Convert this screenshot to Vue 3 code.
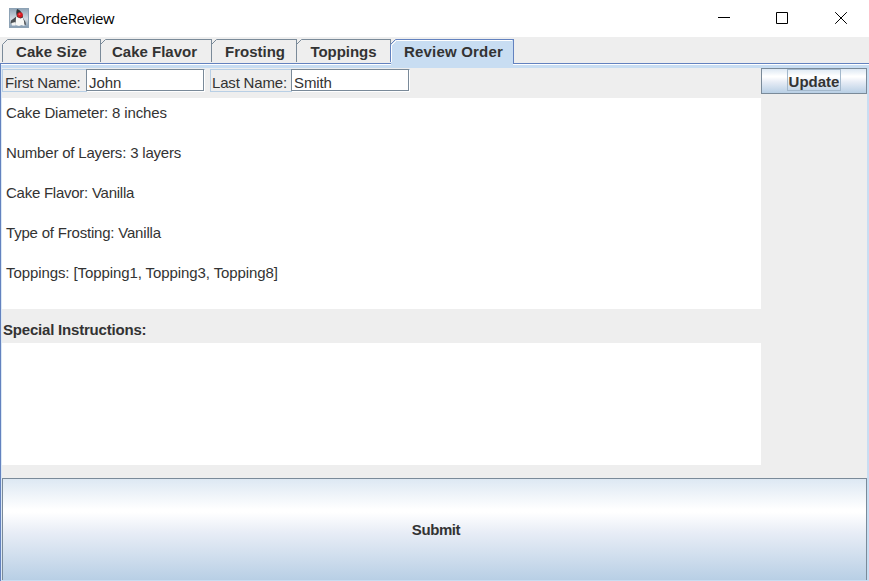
<script setup>
import { ref } from 'vue'

const tabs = [
  { label: 'Cake Size', width: 98, spacing: 0.12 },
  { label: 'Cake Flavor', width: 111, spacing: 0 },
  { label: 'Frosting', width: 85, spacing: 0 },
  { label: 'Toppings', width: 94, spacing: -0.05 },
  { label: 'Review Order', width: 124, spacing: 0.2 },
]
const active = ref(4)
const firstName = 'John'
const lastName = 'Smith'
const order = [
  { text: 'Cake Diameter: 8 inches', spacing: -0.15 },
  { text: 'Number of Layers: 3 layers', spacing: -0.19 },
  { text: 'Cake Flavor: Vanilla', spacing: -0.25 },
  { text: 'Type of Frosting: Vanilla', spacing: -0.2 },
  { text: 'Toppings: [Topping1, Topping3, Topping8]', spacing: -0.09 },
]
</script>

<template>
  <div class="window">
    <header class="titlebar">
      <svg class="logo" width="20" height="20" viewBox="0 0 20 20">
        <defs>
          <linearGradient id="iconBg" x1="0" y1="0" x2="0" y2="1">
            <stop offset="0" stop-color="#8fa3b5" />
            <stop offset=".55" stop-color="#d3dbe2" />
            <stop offset="1" stop-color="#8299b0" />
          </linearGradient>
        </defs>
        <rect x=".5" y=".5" width="19" height="19" fill="url(#iconBg)" stroke="#8da2b5" />
        <path d="M8 8 2 12.500 1.500 15.500 7.500 15zM14 10l2.500 4 .5 3-3-1z" fill="#4a4e52" />
        <path d="M8 5l5.500 4 1.500 4 .500 5-3-1-2.500 1-3.500-1L7 10z" fill="#f8f8f6" />
        <path d="M8 1c3 1 5.500 3.500 6 8.500l-2.500 1L8 9c-1-3-1-5 0-8z" fill="#303437" />
        <path d="M2.500 15 6.500 14v3.500H3z" fill="#f3f4f3" />
        <circle cx="11" cy="7" r="2.800" fill="#d71920" />
        <circle cx="10.500" cy="6.300" r="1" fill="#ef6062" />
      </svg>
      <span class="title">OrdeReview</span>
      <div class="controls">
        <svg width="12" height="12" viewBox="0 0 12 12"><path d="M0 5.500h12" /></svg>
        <svg width="12" height="12" viewBox="0 0 12 12"><path d="M.5.5h11v11H.5z" /></svg>
        <svg width="12" height="12" viewBox="0 0 12 12"><path d="M.2.2l11.600 11.600M11.800.2.2 11.800" /></svg>
      </div>
    </header>

    <nav class="tabs">
      <button
        v-for="(tab, i) in tabs"
        :key="tab.label"
        class="tab"
        :class="{ active: i === active }"
        :style="{ width: tab.width + 'px' }"
        @click="active = i"
      >
        <svg class="outline" :width="tab.width" height="26">
          <path v-if="i === active" class="fill" :d="`M1 27V6L6 1H${tab.width - 1}V27Z`" />
          <path v-if="i === active" class="shine" :d="`M1.500 23V6.500L6.500 1.500H${tab.width - 2}`" />
          <path class="edge" :d="`M.5 23V5.500L5.500 .5H${tab.width}`" />
          <path v-if="i === active" class="edge" :d="`M${tab.width - 0.5} 0V25`" />
          <path v-else class="edge" :d="`M${tab.width + 0.5} 0V7`" />
        </svg>
        <span class="tab-label" :style="{ letterSpacing: tab.spacing + 'px' }">{{ tab.label }}</span>
      </button>
    </nav>

    <main class="pane">
      <div class="review">
        <div class="left">
          <div class="names">
            <label class="field first"><span>First Name:</span><span class="input">{{ firstName }}</span></label>
            <label class="field last"><span>Last Name:</span><span class="input">{{ lastName }}</span></label>
          </div>
          <div class="summary">
            <p v-for="line in order" :key="line.text" :style="{ letterSpacing: line.spacing + 'px' }">{{ line.text }}</p>
          </div>
          <div class="instructions">Special Instructions:</div>
          <div class="notes"></div>
        </div>
        <button class="update"><span>Update</span></button>
      </div>
      <div class="footer"><button class="submit">Submit</button></div>
    </main>
  </div>
</template>

<style>
body { margin: 0; overflow: hidden; }
</style>

<style scoped>
* { box-sizing: border-box; }
.window {
  width: 869px; height: 581px; display: flex; flex-direction: column;
  background: #eee; color: #333; overflow: hidden;
  font: 15px/20px "Liberation Sans", Arial, sans-serif;
}
button { font: inherit; color: inherit; padding: 0; margin: 0; border: 0; background: none; }
.titlebar { height: 37px; flex: none; background: #fff; display: flex; align-items: center; padding: 0 22px 0 9px; }
.logo { display: block; margin-top: -1px; }
.title { margin-left: 5px; margin-top: -1px; color: #000; font: 15px/20px "Open Sans", "Noto Sans", sans-serif; letter-spacing: -.42px; }
.controls { margin-left: auto; margin-top: -2px; display: flex; gap: 47px; }
.controls svg { display: block; fill: none; stroke: #000; stroke-width: 1; }
.controls svg:first-child { margin-right: -1px; }
.tabs { height: 26px; flex: none; padding: 2px 0 0 2px; display: flex; }
.tab { position: relative; height: 24px; flex: none; font-weight: bold; display: flex; justify-content: center; }
.outline { position: absolute; left: 0; top: 0; z-index: 1; overflow: visible; }
.outline path { fill: none; }
.edge { stroke: #7a8a99; }
.active .edge { stroke: #6382bf; }
.outline .fill { fill: #c8ddf2; }
.shine { stroke: #fff; }
.tab-label { position: relative; z-index: 2; line-height: 20px; padding: 3px 0 0 1px; white-space: nowrap; }
.tab:nth-child(3) .tab-label, .tab.active .tab-label { padding-left: 3px; }
.tab:nth-child(2) .tab-label { padding: 3px 2px 0 0; }
.pane {
  flex: 1; min-height: 0; border-top: 1px solid #6382bf; border-left: 1px solid #6382bf;
  box-shadow: inset 0 1px #fff; padding: 1px 0 0 0; display: flex; flex-direction: column;
}
.review {
  height: 413px; flex: none; display: flex; align-items: flex-start;
  border-top: 3px solid #c8ddf2; border-left: 1px solid #dbe8f5; border-right: 2px solid #c8ddf2;
}
.left { width: 759px; }
.names { height: 30px; display: flex; gap: 5px; padding-top: 1px; }
.field { height: 23px; display: flex; border: 1px solid #b8cfe5; border-right: 0; padding-left: 2px; line-height: 25px; position: relative; }
.field.first { width: 203px; }
.field.last { width: 200px; padding-left: 1px; }
.field > span:first-child { white-space: nowrap; letter-spacing: -.18px; }
.input {
  position: absolute; right: 1px; top: -1px; width: 118px; height: 22px; letter-spacing: -.1px;
  background: #fff; border: 1px solid #7a8a99; padding-left: 2px; box-shadow: 1px 1px #fff;
}
.summary { height: 211px; background: #fff; padding: 5px 4px 0; }
.summary p { margin: 0 0 20px; white-space: nowrap; }
.instructions { height: 34px; padding: 11px 1px 0; font-weight: bold; letter-spacing: -.2px; }
.notes { height: 122px; background: #fff; }
.update, .submit {
  border: 1px solid #7a8a99; font-weight: bold;
  background: linear-gradient(#dde8f3, #fff 30%, #fff 33%, #e8edf6 53%, #b8cfe5);
}
.update { width: 106px; height: 26px; display: flex; justify-content: center; align-items: flex-start; }
.update span { height: 22px; width: 54px; border: 1px solid #a3b8cc; line-height: 23px; }
.footer { flex: 1; display: flex; border: solid #c8ddf2; border-width: 0 2px 1px 0; border-left: 1px solid #dbe8f5; }
.submit { flex: 1; border-bottom: 0; letter-spacing: -.4px; padding-left: 3px; }
</style>
